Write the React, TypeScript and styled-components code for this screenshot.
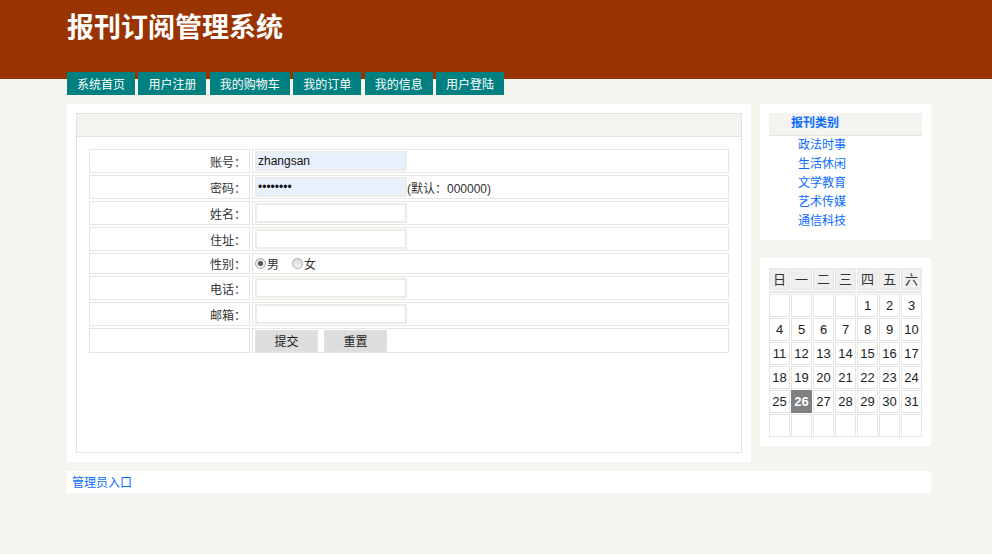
import React from "react";
import styled, { createGlobalStyle } from "styled-components";

const GlobalStyle = createGlobalStyle`
  html, body { margin: 0; padding: 0; }
  body {
    background: #f5f4ef;
    font-family: "Liberation Sans", "Noto Sans CJK SC", sans-serif;
    font-size: 12px;
    color: #333;
  }
`;

const FONT = `"Liberation Sans", "Noto Sans CJK SC", sans-serif`;
const BLUE = "#0a6dff";
const LINE = "#e4e2dc";

const Top = styled.div`
  background: linear-gradient(#993300 0, #993300 79px, transparent 79px);
  padding-left: 67px;
`;

const Title = styled.h1`
  margin: 0;
  height: 72px;
  font-family: "Noto Sans CJK SC", sans-serif;
  font-size: 27px;
  font-weight: bold;
  color: #fff;
  line-height: 51px;
`;

const Nav = styled.nav`
  display: flex;
  gap: 3.4px;
  height: 23px;
`;

const NavItem = styled.a`
  display: block;
  background: #008080;
  color: #fff;
  font-family: "Noto Sans CJK SC", sans-serif;
  font-size: 12px;
  line-height: 23px;
  padding: 0 10px;
  text-decoration: none;
`;

const Wrap = styled.div`
  width: 864px;
  margin-left: 67px;
`;

const MainRow = styled.div`
  display: flex;
  gap: 9px;
  margin-top: 9px;
  align-items: flex-start;
`;

const MainPanel = styled.section`
  width: 684px;
  background: #fff;
  padding: 9px;
  box-sizing: border-box;
`;

const InnerBox = styled.div`
  border: 1px solid ${LINE};
  height: 340px;
  box-sizing: border-box;
`;

const BoxHead = styled.div`
  height: 22px;
  background: #f4f3ef;
  border-bottom: 1px solid ${LINE};
`;

const Form = styled.form`
  margin: 12px;
  display: grid;
  grid-template-columns: 161px 477px;
  column-gap: 2px;
  row-gap: 2px;
`;

const Cell = styled.div<{ $h?: number; $label?: boolean }>`
  height: ${(p) => p.$h ?? 24}px;
  box-sizing: border-box;
  border: 1px solid #e6e5e0;
  display: flex;
  align-items: center;
  justify-content: ${(p) => (p.$label ? "flex-end" : "flex-start")};
  padding: ${(p) => (p.$label ? "0 3px 0 0" : "0 2px")};
  font-family: "Noto Sans CJK SC", sans-serif;
  font-size: 12px;
  color: #333;
`;

const TextInput = styled.input<{ $filled?: boolean }>`
  width: 152px;
  height: 20px;
  box-sizing: border-box;
  border: 2px solid #ebebe7;
  background: ${(p) => (p.$filled ? "#e8f0fe" : "#fff")};
  font-family: ${FONT};
  font-size: 12px;
  color: #111;
  padding: 0 1px;
  margin: 0;
  outline: none;
`;

const Hint = styled.span`
  font-family: ${FONT};
  font-size: 12px;
  color: #333;
`;

const RadioGroup = styled.div`
  display: flex;
  align-items: center;
  gap: 13px;
`;

const RadioLabel = styled.label`
  display: flex;
  align-items: center;
`;

const Radio = styled.input`
  appearance: none;
  width: 11px;
  height: 11px;
  margin: 0 1px 0 0;
  border-radius: 50%;
  border: 1px solid #a9a9a9;
  background: linear-gradient(#dcdcdc, #f4f4f4);
  box-sizing: border-box;
  position: relative;
  &:checked::after {
    content: "";
    position: absolute;
    left: 2px;
    top: 2px;
    width: 5px;
    height: 5px;
    border-radius: 50%;
    background: #555;
  }
`;

const Buttons = styled.div`
  display: flex;
  gap: 6px;
`;

const Btn = styled.button`
  width: 63px;
  height: 22px;
  background: #dddddd;
  border: 1px solid #e2e2e2;
  font-family: "Noto Sans CJK SC", sans-serif;
  font-size: 12px;
  color: #222;
  padding: 0;
`;

const Side = styled.aside`
  width: 171px;
  display: flex;
  flex-direction: column;
  gap: 18px;
`;

const SidePanel = styled.div<{ $pt?: number }>`
  background: #fff;
  padding: ${(p) => p.$pt ?? 9}px 9px 9px;
`;

const CatHead = styled.div`
  height: 22px;
  background: #f4f3ef;
  border-bottom: 1px solid ${LINE};
  padding-left: 22px;
  font-family: "Noto Sans CJK SC", sans-serif;
  font-weight: bold;
  font-size: 12px;
  line-height: 18px;
  color: ${BLUE};
`;

const CatList = styled.ul`
  list-style: none;
  margin: 0;
  padding: 0 0 0 29px;
`;

const CatItem = styled.li`
  line-height: 16px;
  height: 19px;
  font-family: "Noto Sans CJK SC", sans-serif;
  font-size: 12px;
  a { color: ${BLUE}; text-decoration: none; }
`;

const Cal = styled.div`
  display: grid;
  grid-template-columns: repeat(7, 21px);
  gap: 1px;
`;

const CalHead = styled.div`
  height: 22px;
  box-sizing: border-box;
  background: #efefef;
  border: 1px solid #e6e6e3;
  font-family: "Noto Sans CJK SC", sans-serif;
  font-size: 13px;
  line-height: 20px;
  text-align: center;
  color: #333;
`;

const CalRule = styled.div`
  grid-column: 1 / -1;
  height: 2px;
  background: #e6e6e3;
`;

const Day = styled.div<{ $today?: boolean }>`
  height: 23px;
  box-sizing: border-box;
  border: 1px solid ${(p) => (p.$today ? "#808080" : "#e6e6e3")};
  background: ${(p) => (p.$today ? "#808080" : "#fff")};
  color: ${(p) => (p.$today ? "#fff" : "#222")};
  font-weight: ${(p) => (p.$today ? "bold" : "normal")};
  font-family: ${FONT};
  font-size: 13px;
  line-height: 21px;
  text-align: center;
`;

const Footer = styled.footer`
  margin-top: 9px;
  background: #fff;
  height: 22px;
  padding-left: 5px;
  font-family: "Noto Sans CJK SC", sans-serif;
  font-size: 12px;
  line-height: 22px;
  a { color: ${BLUE}; text-decoration: none; }
`;

const navItems = ["系统首页", "用户注册", "我的购物车", "我的订单", "我的信息", "用户登陆"];
const cats = ["政法时事", "生活休闲", "文学教育", "艺术传媒", "通信科技"];
const week = ["日", "一", "二", "三", "四", "五", "六"];

export default function App() {
  const days: (number | null)[] = [];
  for (let i = 0; i < 4; i++) days.push(null);
  for (let d = 1; d <= 31; d++) days.push(d);
  while (days.length < 42) days.push(null);

  return (
    <>
      <GlobalStyle />
      <Top>
        <Title>报刊订阅管理系统</Title>
        <Nav>
          {navItems.map((n) => (
            <NavItem key={n} href="#">{n}</NavItem>
          ))}
        </Nav>
      </Top>
      <Wrap>
        <MainRow>
          <MainPanel>
            <InnerBox>
              <BoxHead />
              <Form onSubmit={(e) => e.preventDefault()}>
                <Cell $label>账号：</Cell>
                <Cell><TextInput $filled defaultValue="zhangsan" /></Cell>
                <Cell $label>密码：</Cell>
                <Cell>
                  <TextInput $filled type="password" defaultValue="00000000" />
                  <Hint>(默认：000000)</Hint>
                </Cell>
                <Cell $label>姓名：</Cell>
                <Cell><TextInput /></Cell>
                <Cell $label>住址：</Cell>
                <Cell><TextInput /></Cell>
                <Cell $label $h={21}>性别：</Cell>
                <Cell $h={21}>
                  <RadioGroup>
                    <RadioLabel><Radio type="radio" name="sex" defaultChecked />男</RadioLabel>
                    <RadioLabel><Radio type="radio" name="sex" />女</RadioLabel>
                  </RadioGroup>
                </Cell>
                <Cell $label>电话：</Cell>
                <Cell><TextInput /></Cell>
                <Cell $label>邮箱：</Cell>
                <Cell><TextInput /></Cell>
                <Cell $label $h={25} />
                <Cell $h={25}>
                  <Buttons>
                    <Btn type="submit">提交</Btn>
                    <Btn type="reset">重置</Btn>
                  </Buttons>
                </Cell>
              </Form>
            </InnerBox>
          </MainPanel>
          <Side>
            <SidePanel>
              <CatHead>报刊类别</CatHead>
              <CatList>
                {cats.map((c) => (
                  <CatItem key={c}><a href="#">{c}</a></CatItem>
                ))}
              </CatList>
            </SidePanel>
            <SidePanel $pt={10}>
              <Cal>
                {week.map((w) => (
                  <CalHead key={w}>{w}</CalHead>
                ))}
                <CalRule />
                {days.map((d, i) => (
                  <Day key={i} $today={d === 26}>{d ?? ""}</Day>
                ))}
              </Cal>
            </SidePanel>
          </Side>
        </MainRow>
        <Footer><a href="#">管理员入口</a></Footer>
      </Wrap>
    </>
  );
}
